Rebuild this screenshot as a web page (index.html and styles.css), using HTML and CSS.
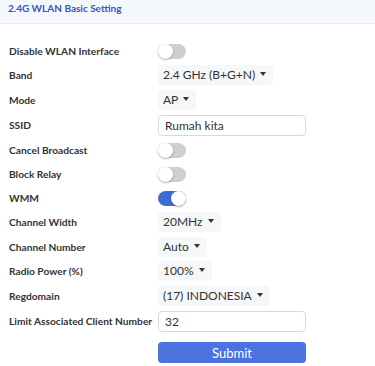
FILE: index.html
```html
<!DOCTYPE html>
<html>
<head>
    <meta charset="UTF-8">
    <meta name="viewport" content="width=device-width, initial-scale=1.0">
    <title>2.4G WLAN Basic Setting</title>
    <link rel="stylesheet" href="styles.css">
</head>
<body>
    <div class="panel-head">2.4G WLAN Basic Setting</div>
    <div class="form">
        <div class="row">
            <label>Disable WLAN Interface</label>
            <span class="switch"></span>
        </div>
        <div class="row pick">
            <label>Band</label>
            <span class="dropdown">2.4 GHz (B+G+N)</span>
        </div>
        <div class="row pick">
            <label>Mode</label>
            <span class="dropdown">AP</span>
        </div>
        <div class="row tall">
            <label>SSID</label>
            <input type="text" value="Rumah kita">
        </div>
        <div class="row">
            <label>Cancel Broadcast</label>
            <span class="switch"></span>
        </div>
        <div class="row">
            <label>Block Relay</label>
            <span class="switch"></span>
        </div>
        <div class="row">
            <label>WMM</label>
            <span class="switch on"></span>
        </div>
        <div class="row pick">
            <label>Channel Width</label>
            <span class="dropdown">20MHz</span>
        </div>
        <div class="row pick">
            <label>Channel Number</label>
            <span class="dropdown">Auto</span>
        </div>
        <div class="row pick">
            <label>Radio Power (%)</label>
            <span class="dropdown">100%</span>
        </div>
        <div class="row pick">
            <label>Regdomain</label>
            <span class="dropdown">(17) INDONESIA</span>
        </div>
        <div class="row tall">
            <label>Limit Associated Client Number</label>
            <input type="text" value="32">
        </div>
        <div class="row actions">
            <label></label>
            <button>Submit</button>
        </div>
    </div>
</body>
</html>
```

FILE: styles.css
```css
body {
    font-family: Lato, "Noto Sans", Arial, sans-serif;
    margin: 0;
    background-color: white;
    color: #222;
}
.panel-head {
    background-color: #f4f8fc;
    border-bottom: 1px solid #e6ecf2;
    color: #3a55b4;
    font-weight: bold;
    font-size: 10px;
    height: 23px;
    line-height: 16px;
    padding: 0 8px;
}
.form {
    padding: 15px 0 0 9px;
}
.row {
    display: grid;
    grid-template-columns: 149px 1fr;
    align-items: center;
    height: 24px;
}
.row.pick {
    height: 24.5px;
}
.row.tall {
    height: 26px;
}
.row.actions {
    height: auto;
    align-items: start;
    padding-top: 8px;
}
label {
    font-size: 10.2px;
    font-weight: bold;
    color: #333;
    white-space: nowrap;
}
.dropdown {
    justify-self: start;
    background-color: #f6f7f9;
    border-radius: 4px;
    padding: 2px 7px 2px 5px;
    font-size: 12px;
    line-height: 16px;
    color: #333;
}
.dropdown::after {
    content: "";
    display: inline-block;
    margin-left: 5px;
    vertical-align: 3px;
    border-top: 4px solid #333;
    border-left: 3px solid transparent;
    border-right: 3px solid transparent;
}
input {
    width: 148px;
    height: 21px;
    box-sizing: border-box;
    border: 1px solid #d6d8dc;
    border-radius: 4px;
    padding: 0 6px;
    font-family: Lato, "Noto Sans", Arial, sans-serif;
    font-size: 12px;
    color: #333;
}
.switch {
    position: relative;
    width: 28px;
    height: 15px;
    border-radius: 8px;
    background-color: #cfcfcf;
}
.switch::after {
    content: "";
    position: absolute;
    left: 0;
    top: 0;
    width: 15px;
    height: 15px;
    border-radius: 50%;
    background-color: white;
    box-shadow: 0 1px 2px rgba(0,0,0,0.3);
}
.switch.on {
    background-color: #3d6bd6;
}
.switch.on::after {
    left: 13px;
}
button {
    width: 148px;
    height: 21px;
    background-color: #4b73e0;
    color: white;
    border: none;
    border-radius: 4px;
    font-family: Lato, "Noto Sans", Arial, sans-serif;
    font-size: 13px;
    padding: 0;
}
```
